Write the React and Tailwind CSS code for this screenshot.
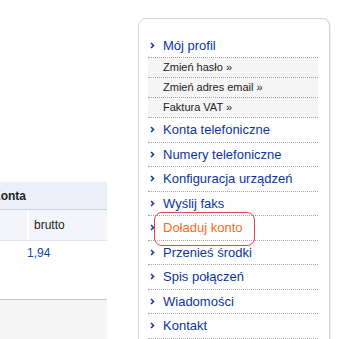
import React from "react";

const Bullet = () => (
  <svg width="5" height="7" viewBox="0 0 5 7" className="shrink-0">
    <path d="M1 1 L3.5 3.5 L1 6" stroke="#1a3a9c" strokeWidth="1.6" fill="none" />
  </svg>
);

const main1 = ["Konta telefoniczne", "Numery telefoniczne", "Konfiguracja urządzeń", "Wyślij faks"];
const main2 = ["Przenieś środki", "Spis połączeń", "Wiadomości", "Kontakt"];
const subs = ["Zmień hasło »", "Zmień adres email »", "Faktura VAT »"];

function MainItem({ label, orange }) {
  return (
    <div className="relative flex h-[24.5px] items-center border-b border-dotted border-[#a8a8a8] pl-[2px]">
      <Bullet />
      <span className={`ml-[8px] text-[13px] leading-none ${orange ? "text-[#ff6a13]" : "text-[#0a35a0]"}`}>{label}</span>
      {orange && (
        <div className="absolute left-[6px] top-[-4px] h-[34px] w-[101px] rounded-[8px] border-[1.5px] border-[#e2474c]" />
      )}
    </div>
  );
}

export default function App() {
  return (
    <div className="relative h-[339px] w-[339px] overflow-hidden bg-white" style={{ fontFamily: '"Liberation Sans", Arial, sans-serif' }}>
      <div className="flex h-full">
        {/* left column */}
        <div className="flex w-[107px] shrink-0 flex-col pt-[182px]">
          <div className="flex h-[28px] items-center overflow-hidden border-b border-[#cdd2e2] bg-[#eceff8]">
            <span className="ml-[-8px] shrink-0 whitespace-nowrap text-[12px] font-bold text-[#222]">Konta</span>
          </div>
          <div className="flex h-[31px] border-b border-[#e2e5ef] bg-[#f3f5fb]">
            <div className="w-[29px] border-r-2 border-white" />
            <div className="flex items-center pl-[5px] text-[12px] text-[#222]">brutto</div>
          </div>
          <div className="flex h-[23px] items-center pl-[27px] text-[12px] text-[#1446a8]">1,94</div>
          <div className="h-[35px]" />
          <div className="flex-1 border-t border-[#c4c4c4] bg-[#f5f5f5]" />
        </div>
        {/* right panel */}
        <div className="ml-[31px] mt-[18px] w-[192px] shrink-0">
          <div className="h-[340px] rounded-t-[8px] border border-[#d6d6d6] bg-white pl-[9px] pr-[11px] pt-[14.5px] shadow-[1px_0_0_#ececec]">
            <div className="flex h-[24.5px] items-center border-b border-dotted border-[#a8a8a8] pl-[2px]">
              <Bullet />
              <span className="ml-[8px] text-[13px] leading-none text-[#0a35a0]">Mój profil</span>
            </div>
            {subs.map((s) => (
              <div key={s} className="flex h-[20px] items-center border-b border-dotted border-[#a8a8a8] bg-[#f5f5f5] pl-[15px] text-[11px] text-[#222]">
                {s}
              </div>
            ))}
            {main1.map((m) => (
              <MainItem key={m} label={m} />
            ))}
            <MainItem label="Doładuj konto" orange />
            {main2.map((m) => (
              <MainItem key={m} label={m} />
            ))}
          </div>
        </div>
      </div>
    </div>
  );
}
